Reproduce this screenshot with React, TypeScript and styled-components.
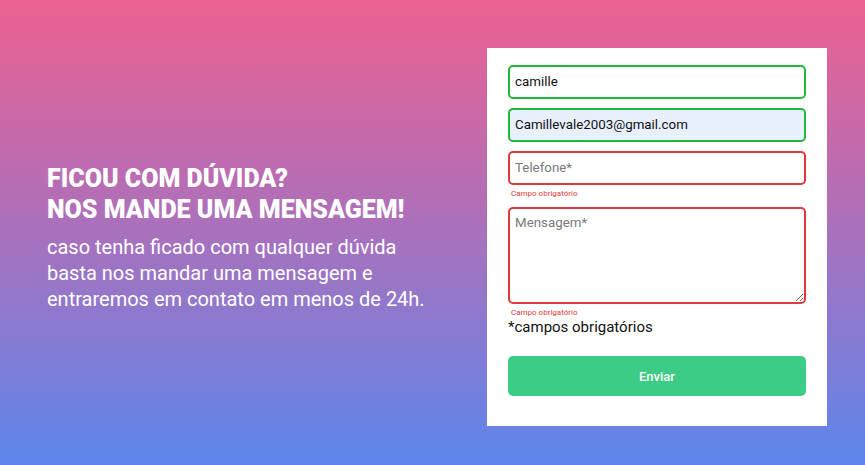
import React from "react";
import styled, { createGlobalStyle } from "styled-components";

const Global = createGlobalStyle`
  html, body { margin: 0; padding: 0; }
  body { font-family: Roboto, "Liberation Sans", Arial, sans-serif; }
  * { box-sizing: border-box; }
`;

const Page = styled.div`
  width: 865px;
  height: 465px;
  background: linear-gradient(180deg, #ec6190 0%, #b06fb8 45%, #5d86ec 100%);
  display: flex;
  align-items: center;
  padding-left: 47px;
  padding-top: 9px;
  overflow: hidden;
`;

const Intro = styled.div`
  width: 440px;
  color: #ffffff;
`;

const Heading = styled.h1`
  margin: 0 0 9px 0;
  font-size: 25px;
  line-height: 31px;
  font-weight: 900;
  text-transform: uppercase;
`;

const Lead = styled.p`
  margin: 0;
  font-size: 20px;
  line-height: 26px;
  font-weight: 400;
`;

const Card = styled.form`
  width: 340px;
  height: 378px;
  background: #ffffff;
  padding: 17px 21px 30px 21px;
  display: flex;
  flex-direction: column;
`;

const Field = styled.input<{ $valid: boolean; $filled?: boolean }>`
  width: 298px;
  height: 34px;
  border: 2px solid ${(p) => (p.$valid ? "#1fb83d" : "#dc3a3c")};
  border-radius: 5px;
  background: ${(p) => (p.$filled ? "#e8f0fe" : "#ffffff")};
  padding: 0 5px;
  font-family: Roboto, "Liberation Sans", Arial, sans-serif;
  font-size: 13.333px;
  color: #111;
  outline: none;
  margin-bottom: 9px;
  &::placeholder { color: #7a7a7a; }
`;

const Area = styled.textarea`
  width: 298px;
  height: 98px;
  border: 2px solid #dc3a3c;
  border-radius: 5px;
  padding: 6px 5px;
  font-family: Roboto, "Liberation Sans", Arial, sans-serif;
  font-size: 13.333px;
  outline: none;
  resize: vertical;
  display: block;
  &::placeholder { color: #7a7a7a; }
`;

const ErrorText = styled.span<{ $after?: number }>`
  display: block;
  color: #e03a3c;
  font-size: 8px;
  line-height: 10px;
  padding-left: 3px;
  margin-top: -5px;
  margin-bottom: ${(p) => p.$after ?? 0}px;
`;

const AreaError = styled(ErrorText)`
  margin-top: 4px;
`;

const Note = styled.div`
  font-size: 15px;
  line-height: 18px;
  color: #111;
  margin-bottom: 20px;
`;

const Submit = styled.button`
  width: 298px;
  height: 40px;
  border: none;
  border-radius: 5px;
  background: #3ccc86;
  color: #ffffff;
  font-family: Roboto, "Liberation Sans", Arial, sans-serif;
  font-size: 13px;
  font-weight: 500;
  cursor: pointer;
`;

export default function App() {
  return (
    <>
      <Global />
      <Page>
        <Intro>
          <Heading>
            Ficou com dúvida?
            <br />
            Nos mande uma mensagem!
          </Heading>
          <Lead>
            caso tenha ficado com qualquer dúvida
            <br />
            basta nos mandar uma mensagem e
            <br />
            entraremos em contato em menos de 24h.
          </Lead>
        </Intro>
        <Card onSubmit={(e) => e.preventDefault()}>
          <Field $valid defaultValue="camille" />
          <Field $valid $filled defaultValue="Camillevale2003@gmail.com" />
          <Field $valid={false} placeholder="Telefone*" />
          <ErrorText $after={8}>Campo obrigatório</ErrorText>
          <Area placeholder="Mensagem*" />
          <AreaError>Campo obrigatório</AreaError>
          <Note>*campos obrigatórios</Note>
          <Submit type="submit">Enviar</Submit>
        </Card>
      </Page>
    </>
  );
}
